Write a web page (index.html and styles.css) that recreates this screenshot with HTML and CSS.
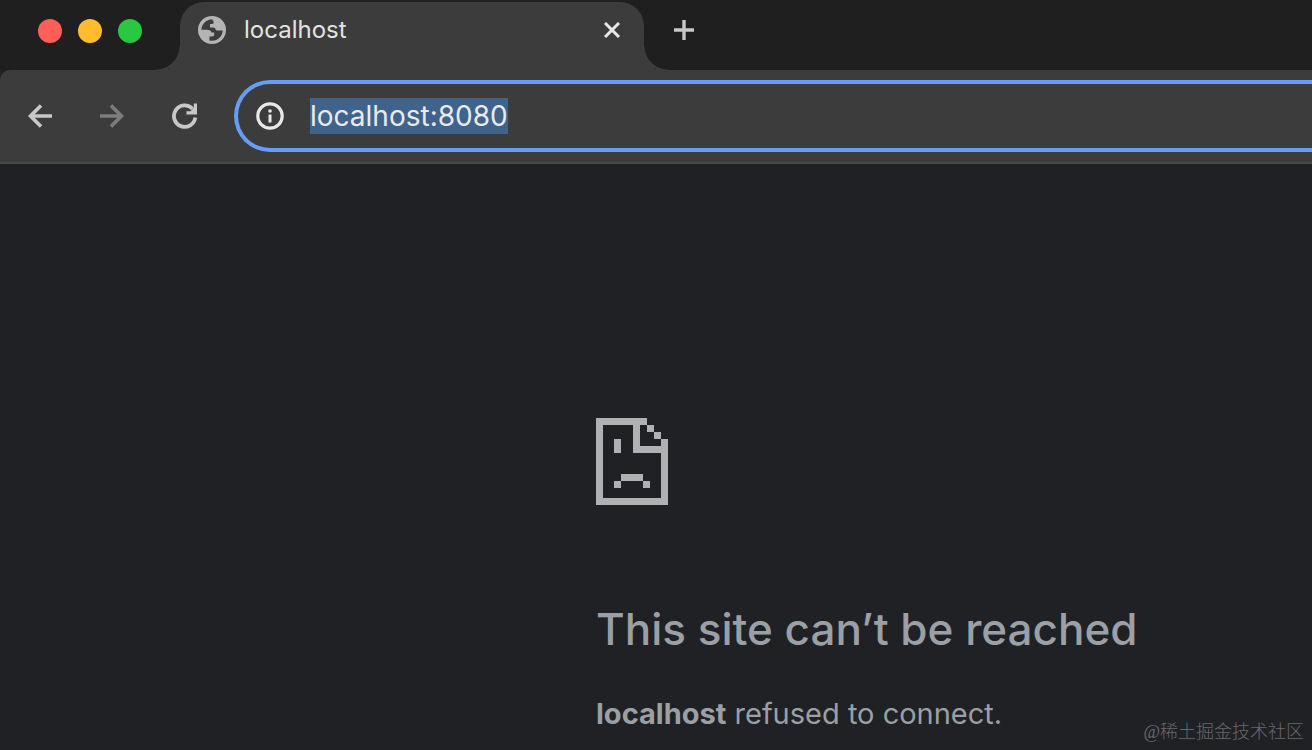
FILE: index.html
```html
<!DOCTYPE html>
<html lang="en">
<head>
  <meta charset="UTF-8">
  <meta name="viewport" content="width=device-width, initial-scale=1.0">
  <title>localhost</title>
  <link rel="stylesheet" href="styles.css">
</head>
<body>

  <!-- Tab Strip -->
  <header class="tab-strip">
    <div class="window-controls">
      <button class="dot close" aria-label="Close window"></button>
      <button class="dot minimize" aria-label="Minimize window"></button>
      <button class="dot zoom" aria-label="Zoom window"></button>
    </div>
    <div class="tab">
      <svg class="favicon" width="28" height="28" viewBox="0 0 28 28">
        <circle cx="14" cy="14" r="14" fill="#b4b4b4"/>
        <path d="M14 3.300C8.500 3.500 4 7.800 3.300 13.700H9C11.500 13.700 13.200 14.800 13.700 16.500H16.200V19C16.200 20.500 14.500 20.500 11.500 20.500V24.400C18.500 26 24.500 21 24.700 14.500H19C17 14.500 18 11.500 15.500 11.500H12V8H14.500C15.500 8 15.500 7 15.500 6V5C15 5 14.500 4.500 14 3.300Z" fill="#3c3c3c"/>
      </svg>
      <span class="tab-title">localhost</span>
      <button class="tab-close" aria-label="Close tab">
        <svg width="16" height="16" viewBox="0 0 16 16"><path d="M1 1L15 15M15 1L1 15" stroke="#e8e8e8" stroke-width="3"/></svg>
      </button>
    </div>
    <button class="new-tab" aria-label="New tab">
      <svg width="20" height="20" viewBox="0 0 20 20"><path d="M10 0V20M0 10H20" stroke="#c8c8c8" stroke-width="3.400"/></svg>
    </button>
  </header>

  <!-- Toolbar -->
  <nav class="toolbar">
    <button class="nav-btn" aria-label="Back">
      <svg width="26" height="26" viewBox="0 0 26 26"><path d="M25 13H4M14 2.500L3.500 13L14 23.500" fill="none" stroke="#c8c8c8" stroke-width="3.600"/></svg>
    </button>
    <button class="nav-btn" aria-label="Forward" disabled>
      <svg width="26" height="26" viewBox="0 0 26 26"><path d="M1 13H22M12 2.500L22.500 13L12 23.500" fill="none" stroke="#7d7d7d" stroke-width="3.600"/></svg>
    </button>
    <button class="nav-btn" aria-label="Reload">
      <svg width="26" height="26" viewBox="0 0 26 26">
        <path d="M24.300 14.500A10.700 10.700 0 1 1 21.500 5.800" fill="none" stroke="#c8c8c8" stroke-width="3.800"/>
        <path d="M26 0.500V11.500H15.500V8.200H19.500L22.800 4.500V0.500Z" fill="#c8c8c8"/>
      </svg>
    </button>
    <div class="address-bar">
      <svg width="28" height="28" viewBox="0 0 28 28">
        <circle cx="14" cy="14" r="12.200" fill="none" stroke="#e8e8e8" stroke-width="3.200"/>
        <path d="M14 12.500V20.500" stroke="#e8e8e8" stroke-width="3"/>
        <circle cx="14" cy="9" r="1.800" fill="#e8e8e8"/>
      </svg>
      <input id="address" type="text" value="localhost:8080" aria-label="Address" spellcheck="false">
    </div>
  </nav>

  <!-- Error Page -->
  <main class="error-page">
    <div class="error-content">
      <svg class="error-icon" width="72" height="87" viewBox="0 0 72 87" shape-rendering="crispEdges">
        <path d="M0 0H51V7H58V14H65V21H72V87H0ZM7 7V80H65V35H37V7ZM44 7V28H65V21H58V14H51V7Z" fill="#b0b1b3" fill-rule="evenodd"/>
        <path d="M18 21H25V35H18ZM25 56H47V63H25ZM18 63H25V70H18ZM47 63H54V70H47Z" fill="#b0b1b3"/>
      </svg>
      <h1>This site can’t be reached</h1>
      <p><strong>localhost</strong> refused to connect.</p>
    </div>
    <span class="watermark">@稀土掘金技术社区</span>
  </main>

  <script>
    document.getElementById('address').focus();
    document.getElementById('address').select();
  </script>

</body>
</html>
```
FILE: styles.css
```css
/* Global Styles */
* {
  box-sizing: border-box;
}

body {
  margin: 0;
  min-height: 100vh;
  display: flex;
  flex-direction: column;
  background-color: #202124;
  font-family: Inter, "Liberation Sans", sans-serif;
  overflow: hidden;
}

button {
  padding: 0;
  border: none;
  background: none;
}

svg {
  display: block;
  flex-shrink: 0;
}

/* Tab Strip */
.tab-strip {
  display: flex;
  align-items: flex-end;
  height: 70px;
  background-color: #1f1f1f;
}

.window-controls {
  display: flex;
  align-items: center;
  gap: 16px;
  width: 180px;
  height: 70px;
  padding: 0 0 8px 38px;
}

.dot {
  width: 24px;
  height: 24px;
  border-radius: 50%;
}

.close {
  background-color: #ff5f57;
}

.minimize {
  background-color: #febc2e;
}

.zoom {
  background-color: #28c840;
}

.tab {
  position: relative;
  display: flex;
  align-items: center;
  width: 464px;
  height: 68px;
  padding: 0 24px 12px 18px;
  background-color: #3c3c3c;
  border-radius: 24px 24px 0 0;
}

/* curved feet of the tab */
.tab::before,
.tab::after {
  content: "";
  position: absolute;
  bottom: 0;
  width: 24px;
  height: 24px;
}

.tab::before {
  right: 100%;
  background: radial-gradient(circle at 0 0, transparent 23px, #3c3c3c 24px);
}

.tab::after {
  left: 100%;
  background: radial-gradient(circle at 100% 0, transparent 23px, #3c3c3c 24px);
}

.tab-title {
  flex: 1;
  margin-left: 18px;
  color: #e3e3e3;
  font-size: 24px;
  line-height: 28px;
}

.new-tab {
  height: 70px;
  margin-left: 30px;
  padding-bottom: 10px;
}

/* Toolbar */
.toolbar {
  display: flex;
  align-items: center;
  height: 94px;
  padding-left: 27px;
  background-color: #3c3c3c;
  border-bottom: 2px solid #474747;
  border-top-left-radius: 10px;
}

.nav-btn {
  margin-right: 46px;
}

.address-bar {
  display: flex;
  flex: 1;
  align-items: center;
  gap: 26px;
  height: 72px;
  margin-left: -9px;
  padding-left: 18px;
  border: 4px solid #669df6;
  border-right: none;
  border-radius: 36px 0 0 36px;
}

.address-bar input {
  flex: 1;
  min-width: 0;
  padding: 0;
  border: none;
  outline: none;
  background: none;
  color: #e8eaed;
  font-family: inherit;
  font-size: 28px;
  line-height: 36px;
}

.address-bar input::selection {
  background-color: #3f638b;
  color: #e8eaed;
}

/* Error Page */
.error-page {
  position: relative;
  flex: 1;
  padding-top: 254px;
}

.error-content {
  margin-left: auto;
  width: calc(50% + 60px);
  color: #9aa0a6;
}

.error-content h1 {
  margin: 95px 0 0;
  font-size: 44px;
  font-weight: 500;
  line-height: 58px;
}

.error-content p {
  margin: 32px 0 0;
  font-size: 29px;
  line-height: 48px;
}

.watermark {
  position: absolute;
  right: 8px;
  bottom: 6px;
  color: #68696c;
  font-family: "Liberation Serif", "Noto Sans CJK SC", sans-serif;
  font-size: 18px;
  font-weight: 300;
  line-height: 24px;
}
```
